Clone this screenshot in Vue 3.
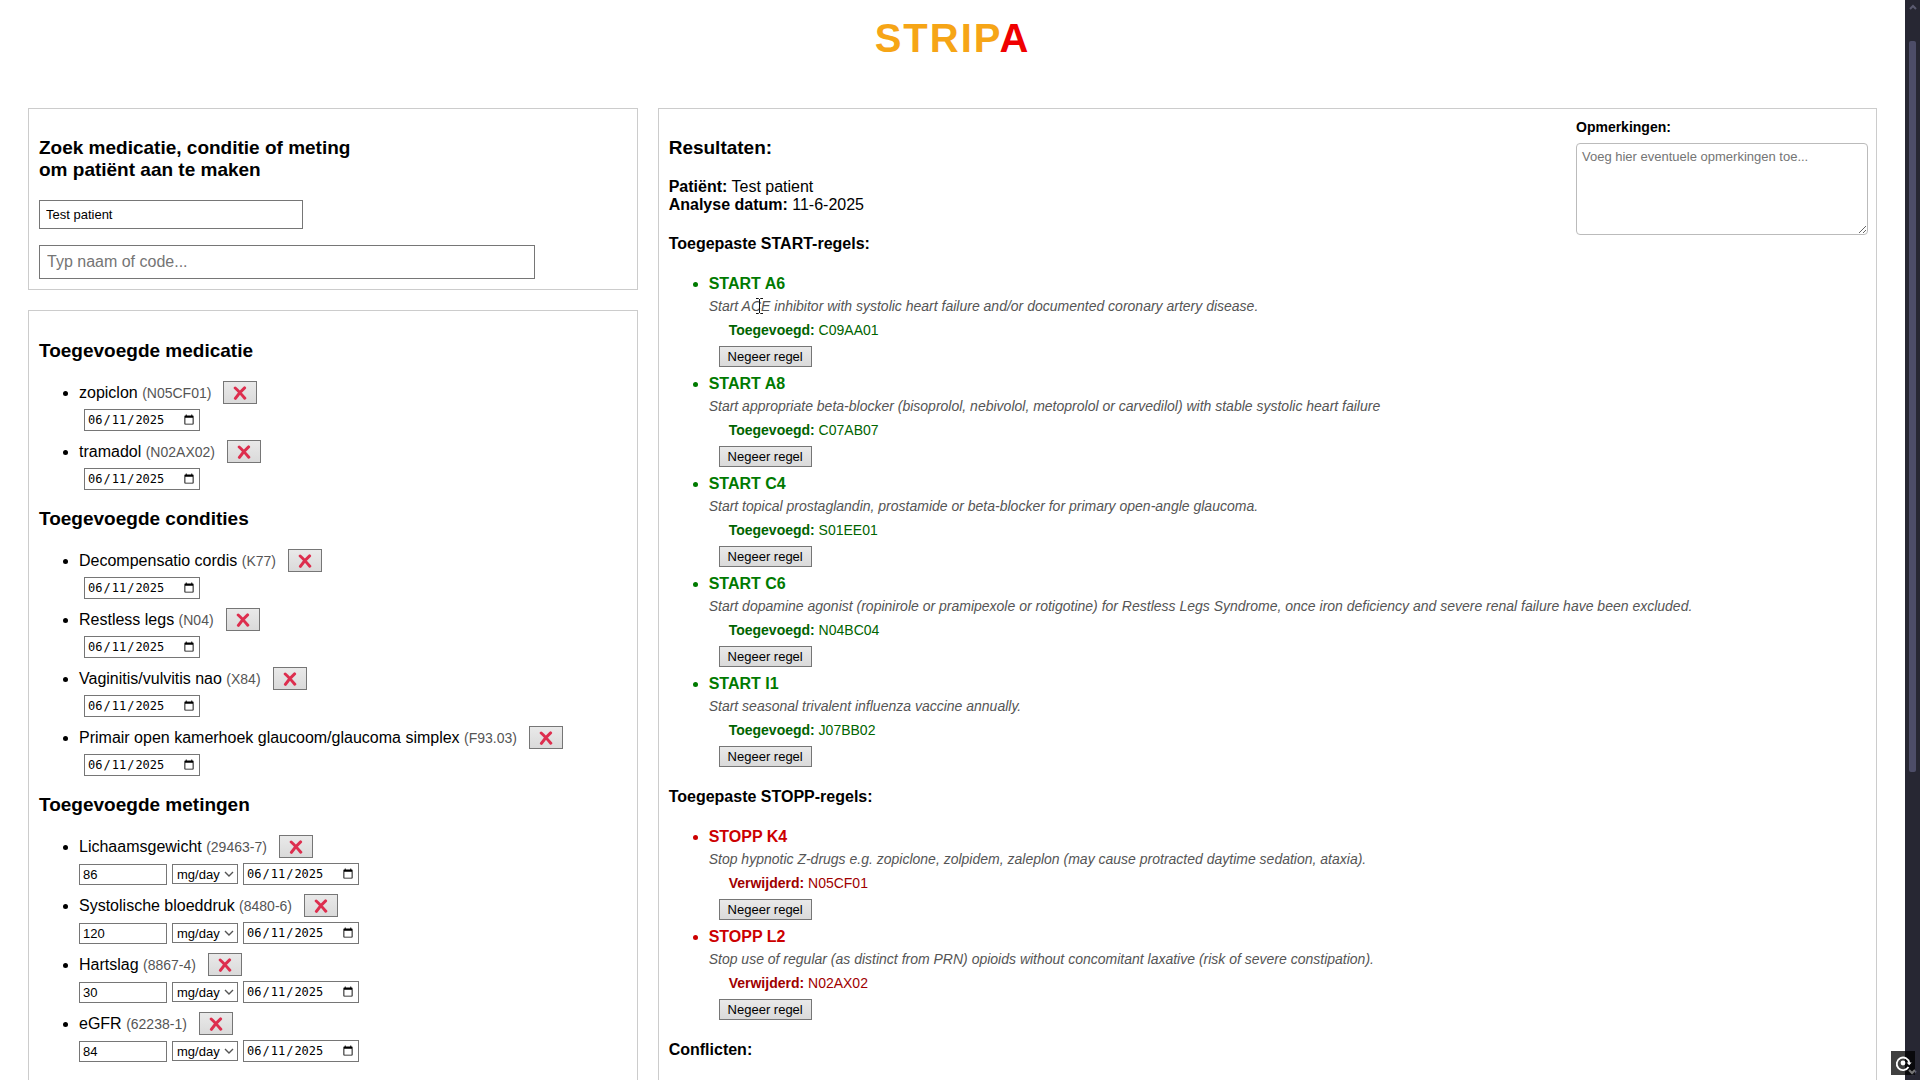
<script setup>
import { ref } from 'vue'

const patientName = ref('Test patient')
const query = ref('')
const remarks = ref('')

const groups = ref([
  {
    title: 'Toegevoegde medicatie',
    items: [
      { name: 'zopiclon', code: 'N05CF01', date: '2025-06-11' },
      { name: 'tramadol', code: 'N02AX02', date: '2025-06-11' }
    ]
  },
  {
    title: 'Toegevoegde condities',
    items: [
      { name: 'Decompensatio cordis', code: 'K77', date: '2025-06-11' },
      { name: 'Restless legs', code: 'N04', date: '2025-06-11' },
      { name: 'Vaginitis/vulvitis nao', code: 'X84', date: '2025-06-11' },
      { name: 'Primair open kamerhoek glaucoom/glaucoma simplex', code: 'F93.03', date: '2025-06-11' }
    ]
  },
  {
    title: 'Toegevoegde metingen',
    items: [
      { name: 'Lichaamsgewicht', code: '29463-7', value: '86', unit: 'mg/day', date: '2025-06-11' },
      { name: 'Systolische bloeddruk', code: '8480-6', value: '120', unit: 'mg/day', date: '2025-06-11' },
      { name: 'Hartslag', code: '8867-4', value: '30', unit: 'mg/day', date: '2025-06-11' },
      { name: 'eGFR', code: '62238-1', value: '84', unit: 'mg/day', date: '2025-06-11' }
    ]
  }
])

const ruleSets = [
  {
    title: 'Toegepaste START-regels:',
    kind: 'start',
    action: 'Toegevoegd:',
    rules: [
      { id: 'START A6', text: 'Start ACE inhibitor with systolic heart failure and/or documented coronary artery disease.', code: 'C09AA01' },
      { id: 'START A8', text: 'Start appropriate beta-blocker (bisoprolol, nebivolol, metoprolol or carvedilol) with stable systolic heart failure', code: 'C07AB07' },
      { id: 'START C4', text: 'Start topical prostaglandin, prostamide or beta-blocker for primary open-angle glaucoma.', code: 'S01EE01' },
      { id: 'START C6', text: 'Start dopamine agonist (ropinirole or pramipexole or rotigotine) for Restless Legs Syndrome, once iron deficiency and severe renal failure have been excluded.', code: 'N04BC04' },
      { id: 'START I1', text: 'Start seasonal trivalent influenza vaccine annually.', code: 'J07BB02' }
    ]
  },
  {
    title: 'Toegepaste STOPP-regels:',
    kind: 'stopp',
    action: 'Verwijderd:',
    rules: [
      { id: 'STOPP K4', text: 'Stop hypnotic Z-drugs e.g. zopiclone, zolpidem, zaleplon (may cause protracted daytime sedation, ataxia).', code: 'N05CF01' },
      { id: 'STOPP L2', text: 'Stop use of regular (as distinct from PRN) opioids without concomitant laxative (risk of severe constipation).', code: 'N02AX02' }
    ]
  }
]

function remove(group, index) {
  group.items.splice(index, 1)
}
</script>

<template>
  <div class="shell">
    <div class="page">
      <header class="brand">
        <h1>STRIP<span>A</span></h1>
      </header>

      <main class="columns">
        <div class="side">
          <section class="panel search">
            <h2>Zoek medicatie, conditie of meting<br>om patiënt aan te maken</h2>
            <input v-model="patientName" class="patient" type="text" aria-label="Naam patiënt">
            <input v-model="query" class="query" type="text" placeholder="Typ naam of code..." aria-label="Naam of code">
          </section>

          <section class="panel added">
            <template v-for="group in groups" :key="group.title">
              <h2>{{ group.title }}</h2>
              <ul>
                <li v-for="(item, i) in group.items" :key="item.code">
                  <div class="item-head">
                    <span class="name">{{ item.name }} <small>({{ item.code }})</small></span>
                    <button class="remove" type="button" :aria-label="`Verwijder ${item.name}`" @click="remove(group, i)">
                      <svg viewBox="0 0 14 14" width="14" height="14" aria-hidden="true">
                        <path d="M2.2 2 Q5.6 5 11.8 12.2 M11.6 1.9 Q6.6 6.4 2.4 12.3" fill="none" stroke="#dd2e4e" stroke-width="3" stroke-linecap="round" />
                      </svg>
                    </button>
                  </div>
                  <div class="fields" :class="{ single: !item.unit }">
                    <template v-if="item.unit">
                      <input v-model="item.value" class="value" type="text" :aria-label="`Waarde ${item.name}`">
                      <span class="unit">
                        <select v-model="item.unit" :aria-label="`Eenheid ${item.name}`">
                          <option>mg/day</option>
                        </select>
                        <svg viewBox="0 0 10 6" width="10" height="6" aria-hidden="true">
                          <path d="M1 1 L5 5 L9 1" fill="none" stroke="#555" stroke-width="1.4" />
                        </svg>
                      </span>
                    </template>
                    <input v-model="item.date" class="date" type="date" :aria-label="`Datum ${item.name}`">
                  </div>
                </li>
              </ul>
            </template>
          </section>
        </div>

        <section class="panel results">
          <div class="results-top">
            <div class="summary">
              <h2>Resultaten:</h2>
              <p>
                <strong>Patiënt:</strong> Test patient<br>
                <strong>Analyse datum:</strong> 11-6-2025
              </p>
            </div>
            <div class="remarks">
              <label for="remarks">Opmerkingen:</label>
              <textarea id="remarks" v-model="remarks" placeholder="Voeg hier eventuele opmerkingen toe..."></textarea>
            </div>
          </div>

          <template v-for="set in ruleSets" :key="set.kind">
            <h3>{{ set.title }}</h3>
            <ul :class="set.kind">
              <li v-for="rule in set.rules" :key="rule.id">
                <strong class="rule-id">{{ rule.id }}</strong>
                <p class="rule-text">{{ rule.text }}</p>
                <p class="rule-action"><strong>{{ set.action }}</strong> {{ rule.code }}</p>
                <button class="ignore" type="button">Negeer regel</button>
              </li>
            </ul>
          </template>
          <h3>Conflicten:</h3>
        </section>
      </main>
    </div>

    <div class="scrollbar" aria-hidden="true">
      <svg viewBox="0 0 8 6" width="8" height="6"><path d="M1 5 L4 2 L7 5" fill="none" stroke="#5b5b70" stroke-width="2" /></svg>
      <div class="track"><div class="thumb"></div></div>
      <svg viewBox="0 0 8 6" width="8" height="6"><path d="M1 1 L4 4 L7 1" fill="none" stroke="#5b5b70" stroke-width="2" /></svg>
    </div>

    <svg class="cursor" viewBox="0 0 9 18" width="9" height="18" aria-hidden="true">
      <path d="M1 1.5 H3.5 L4.5 2.5 L5.5 1.5 H8 M4.5 2 V16 M1 16.5 H3.5 L4.5 15.5 L5.5 16.5 H8" fill="none" stroke="#111" stroke-width="1" />
    </svg>

    <div class="capture" aria-hidden="true">
      <svg viewBox="0 0 24 24" width="24" height="24">
        <path d="M17.5 16 A6.3 6.3 0 1 1 18.3 12" fill="none" stroke="#fff" stroke-width="1.8" />
        <path d="M15.6 11.6 H20.6 L18.2 14.2 Z" fill="#fff" />
        <circle cx="12" cy="12" r="2.4" fill="#fff" />
        <path d="M18 19 L21 22 L24 19" fill="none" stroke="#777" stroke-width="2" />
      </svg>
    </div>
  </div>
</template>

<style>
body {
  margin: 0;
}
</style>

<style scoped>
.shell {
  position: relative;
  display: flex;
  height: 100vh;
  overflow: hidden;
  background: #fff;
  color: #000;
  font-family: "Liberation Sans", Arial, sans-serif;
  font-size: 16px;
  line-height: 18px;
}

.page {
  flex: 1;
  min-width: 0;
}

.brand {
  height: 108px;
  text-align: center;
}

h1 {
  margin: 0;
  padding-top: 14px;
  font-size: 40px;
  line-height: 48px;
  letter-spacing: 2px;
  color: #f6a516;
}

h1 span {
  color: #f00000;
}

.columns {
  display: grid;
  grid-template-columns: 1fr 2fr;
  gap: 20px;
  padding: 0 28px;
}

.side {
  display: flex;
  flex-direction: column;
  gap: 20px;
}

.panel {
  box-sizing: border-box;
  padding: 10px;
  border: 1px solid #ccc;
}

.added {
  flex: 1;
}

h2 {
  margin: 0;
  font-size: 19px;
  line-height: 22px;
}

h3 {
  margin: 0;
  font-size: 16px;
  line-height: 18px;
}

p {
  margin: 0;
}

ul {
  margin: 0;
  padding: 0 0 0 40px;
}

input,
select,
button,
textarea {
  box-sizing: border-box;
  margin: 0;
  border: 1px solid #767676;
  border-radius: 0;
  background: #fff;
  color: #000;
  font-family: inherit;
  font-size: 13px;
}

/* search */
.search {
  display: flex;
  flex-direction: column;
  align-items: flex-start;
}

.search h2 {
  margin: 18px 0 19px;
}

.patient {
  width: 45%;
  height: 29px;
  margin-bottom: 16px;
  padding: 0 6px;
}

.query {
  width: 496px;
  max-width: 100%;
  height: 34px;
  padding: 0 7px;
  font-size: 16px;
}

::placeholder {
  color: #757575;
}

/* added items */
.added h2 {
  margin: 9px 0 19px;
}

.added h2:first-child {
  margin-top: 19px;
}

.added li {
  height: 59px;
  line-height: 23px;
}

.item-head {
  display: inline-flex;
  align-items: center;
  gap: 12px;
  height: 23px;
  vertical-align: top;
}

small {
  font-size: 14px;
  color: #555;
}

.remove {
  display: flex;
  align-items: center;
  justify-content: center;
  width: 34px;
  height: 23px;
  padding: 0;
  background: linear-gradient(#e9e9e9, #dadada);
}

.fields {
  display: flex;
  align-items: center;
  gap: 5px;
  padding-top: 5px;
}

.single {
  padding-left: 5px;
}

.value {
  width: 88px;
  height: 21px;
  padding: 0 3px;
}

.unit {
  position: relative;
  display: flex;
}

.unit select {
  width: 66px;
  height: 20px;
  padding: 0 4px;
  appearance: none;
}

.unit svg {
  position: absolute;
  top: 7px;
  right: 4px;
  pointer-events: none;
}

.date {
  width: 116px;
  height: 22px;
  padding: 0 2px;
  font-family: "DejaVu Sans Mono", monospace;
  font-size: 12px;
}

/* results */
.results {
  padding-right: 8px;
  padding-bottom: 60px;
}

.results-top {
  display: flex;
  justify-content: space-between;
}

.summary h2 {
  margin: 18px 0 19px;
}

.remarks {
  display: flex;
  flex-direction: column;
  width: 292px;
  font-size: 14px;
  line-height: 16px;
}

.remarks label {
  font-weight: bold;
}

textarea {
  height: 92px;
  margin-top: 8px;
  padding: 5px;
  border-color: #bbb;
  border-radius: 4px;
  font-size: 13px;
  resize: both;
}

.results li {
  height: 100px;
}

.results ul {
  margin: 22px 0 13px;
}

.start {
  color: #007a00;
}

.stopp {
  color: #cc0000;
}

.rule-id {
  display: block;
}

.rule-text {
  margin-top: 5px;
  color: #555;
  font-size: 14px;
  font-style: italic;
  line-height: 17px;
}

.rule-action {
  margin: 7px 0 0 20px;
  font-size: 14px;
  line-height: 17px;
}

.start .rule-action {
  color: #006400;
}

.stopp .rule-action {
  color: #a00000;
}

.ignore {
  display: block;
  width: 93px;
  height: 21px;
  margin: 7px 0 0 10px;
  padding: 0;
  background: linear-gradient(#e9e9e9, #dadada);
}

/* window furniture */
.scrollbar {
  box-sizing: border-box;
  display: flex;
  flex-direction: column;
  align-items: center;
  width: 15px;
  padding: 4px 0;
  background: #272733;
}

.track {
  flex: 1;
  width: 7px;
  padding-top: 31px;
}

.thumb {
  height: 71%;
  border-radius: 2px;
  background: #4d4d68;
}

.cursor {
  position: absolute;
  top: 297px;
  left: 755px;
}

.capture {
  position: absolute;
  right: 5px;
  bottom: 5px;
  width: 24px;
  height: 24px;
  background: rgba(0, 0, 0, 0.75);
}
</style>
